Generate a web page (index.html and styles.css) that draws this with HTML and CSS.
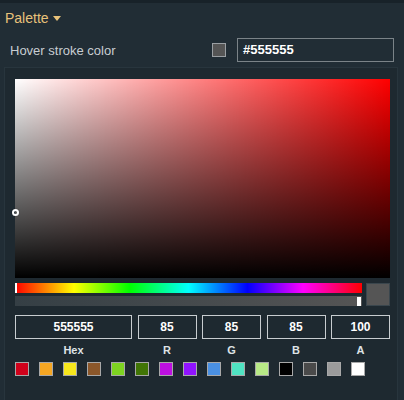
FILE: index.html
```html
<!DOCTYPE html>
<html>
<head>
<meta charset="utf-8">
<link rel="stylesheet" href="styles.css">
</head>
<body>
<div class="topbar"></div>
<div class="header">
  <span class="title">Palette</span>
  <svg class="caret" width="8" height="5" viewBox="0 0 8 5"><path d="M0 0H8L4 5Z" fill="#e8c27a"/></svg>
</div>
<div class="row">
  <span class="label">Hover stroke color</span>
  <span class="chip"></span>
  <div class="hexfield">#555555</div>
</div>
<div class="panel">
  <div class="sat">
    <div class="sat-white"></div>
    <div class="sat-black"></div>
    <div class="sat-handle"></div>
  </div>
  <div class="bars">
    <div class="sliders">
      <div class="hue"><div class="hue-handle"></div></div>
      <div class="alpha"><div class="alpha-handle"></div></div>
    </div>
    <div class="preview"></div>
  </div>
  <div class="fields">
    <div class="field wide"><div class="box">555555</div><div class="flabel">Hex</div></div>
    <div class="field"><div class="box">85</div><div class="flabel">R</div></div>
    <div class="field"><div class="box">85</div><div class="flabel">G</div></div>
    <div class="field"><div class="box">85</div><div class="flabel">B</div></div>
    <div class="field"><div class="box">100</div><div class="flabel">A</div></div>
  </div>
  <div class="swatches">
    <span class="sw" style="background:#d0021b"></span>
    <span class="sw" style="background:#f5a623"></span>
    <span class="sw" style="background:#f8e71c"></span>
    <span class="sw" style="background:#8b572a"></span>
    <span class="sw" style="background:#7ed321"></span>
    <span class="sw" style="background:#417505"></span>
    <span class="sw" style="background:#bd10e0"></span>
    <span class="sw" style="background:#9013fe"></span>
    <span class="sw" style="background:#4a90e2"></span>
    <span class="sw" style="background:#50e3c2"></span>
    <span class="sw" style="background:#b8e986"></span>
    <span class="sw" style="background:#000000"></span>
    <span class="sw" style="background:#4a4a4a"></span>
    <span class="sw" style="background:#9b9b9b"></span>
    <span class="sw" style="background:#ffffff"></span>
  </div>
</div>
</body>
</html>
```
FILE: styles.css
```css
html, body {
  margin: 0;
  padding: 0;
  background: #212d35;
  font-family: "Liberation Sans", Arial, sans-serif;
  width: 404px;
  height: 400px;
  overflow: hidden;
}
.topbar {
  height: 3px;
  background: #182229;
}
.header {
  display: flex;
  align-items: center;
  height: 30px;
  padding-left: 5px;
  gap: 4px;
}
.title {
  color: #e8c27a;
  font-size: 14px;
}
.caret {
  margin-top: 1px;
}
.row {
  display: flex;
  align-items: center;
  height: 24px;
  margin-top: 5px;
  padding-left: 10px;
}
.label {
  color: #c8cdd2;
  font-size: 13px;
  width: 202px;
}
.chip {
  width: 12px;
  height: 12px;
  background: #555555;
  border: 1px solid #9a9fa3;
  margin-right: 11px;
}
.hexfield {
  box-sizing: border-box;
  width: 157px;
  height: 24px;
  border: 1px solid #7b8388;
  color: #ffffff;
  font-weight: bold;
  font-size: 13px;
  line-height: 22px;
  padding-left: 5px;
}
.panel {
  margin: 5px 6px 0 4px;
  height: 340px;
  background: #1e2930;
  border: 1px solid #28353d;
  border-bottom: none;
  padding: 11px 7px 0 10px;
  box-sizing: border-box;
}
.sat {
  position: relative;
  height: 199px;
  background: #ff0000;
}
.sat-white {
  position: absolute;
  inset: 0;
  background: linear-gradient(to right, #ffffff, rgba(255,255,255,0));
}
.sat-black {
  position: absolute;
  inset: 0;
  background: linear-gradient(to bottom, rgba(0,0,0,0), #000000);
}
.sat-handle {
  position: absolute;
  left: -3px;
  top: 130px;
  width: 3px;
  height: 3px;
  border-radius: 50%;
  border: 2px solid #ffffff;
  box-shadow: 0 0 1px rgba(0,0,0,0.6);
}
.bars {
  display: flex;
  gap: 4px;
  margin-top: 5px;
}
.sliders {
  flex: 1;
  display: flex;
  flex-direction: column;
  gap: 3px;
}
.hue {
  position: relative;
  height: 10px;
  background: linear-gradient(to right, #ff0000 0%, #ffff00 17%, #00ff00 33%, #00ffff 50%, #0000ff 67%, #ff00ff 83%, #ff0000 100%);
}
.hue-handle {
  position: absolute;
  left: 0;
  top: 0;
  width: 2px;
  height: 10px;
  background: #ffffff;
}
.alpha {
  position: relative;
  height: 10px;
  background: linear-gradient(to right, #353f45, #555555);
}
.alpha-handle {
  position: absolute;
  right: 1px;
  top: 1px;
  width: 4px;
  height: 9px;
  background: #ffffff;
}
.preview {
  width: 24px;
  height: 23px;
  background: #555555;
  border: 1px solid #3a464d;
  box-sizing: border-box;
}
.fields {
  display: flex;
  justify-content: space-between;
  margin-top: 9px;
}
.field {
  width: 59px;
  display: flex;
  flex-direction: column;
  align-items: center;
}
.field.wide {
  width: 117px;
}
.box {
  box-sizing: border-box;
  width: 100%;
  height: 24px;
  border: 1px solid #c8cdd0;
  color: #ffffff;
  font-weight: bold;
  font-size: 12px;
  line-height: 22px;
  text-align: center;
}
.flabel {
  color: #dfe3e6;
  font-weight: bold;
  font-size: 11px;
  margin-top: 5px;
  line-height: 13px;
}
.swatches {
  display: flex;
  gap: 10px;
  margin-top: 5px;
}
.sw {
  box-sizing: border-box;
  width: 14px;
  height: 14px;
  border: 1px solid #a8a8a8;
}
```
